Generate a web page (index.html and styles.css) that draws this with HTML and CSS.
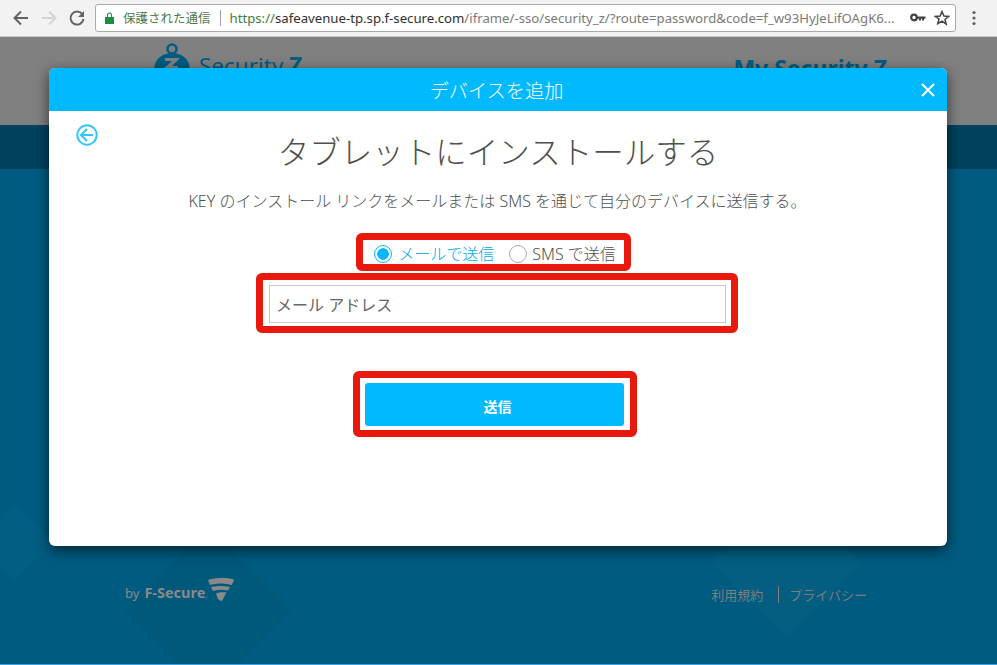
FILE: index.html
```html
<!DOCTYPE html>
<html lang="ja">
<head>
<meta charset="utf-8">
<title>デバイスを追加</title>
<link rel="stylesheet" href="styles.css">
</head>
<body>
<div class="toolbar">
  <svg class="nav" width="18" height="18" viewBox="0 0 18 18"><path d="M16 9H3M9 2.500 2.500 9 9 15.500" fill="none" stroke="#5f6368" stroke-width="2"/></svg>
  <svg class="nav" width="18" height="18" viewBox="0 0 18 18"><path d="M2 9h13M9 2.500 15.500 9 9 15.500" fill="none" stroke="#d4d4d4" stroke-width="2"/></svg>
  <svg class="nav" width="18" height="18" viewBox="0 0 18 18"><path d="M14.500 5.500A6.500 6.500 0 1 0 15.500 10" fill="none" stroke="#5f6368" stroke-width="2"/><path d="M16 2v6h-6z" fill="#5f6368"/></svg>
  <div class="omnibox">
    <svg class="lock" width="10" height="12" viewBox="0 0 10 12"><path d="M0 5h9v7H0zM2 5V3a2.500 2.500 0 0 1 5 0v2" fill="#1e8e3e"/><path d="M3 5V3a1.500 1.500 0 0 1 3 0v2z" fill="#fff"/></svg>
    <span class="secure">保護された通信</span>
    <span class="divider"></span>
    <span class="url"><span class="scheme">https://</span><span class="host">safeavenue-tp.sp.f-secure.com</span>/iframe/-sso/security_z/?route=password&amp;code=f_w93HyJeLifOAgK6...</span>
    <svg class="key" width="16" height="10" viewBox="0 0 16 10"><circle cx="4" cy="4.500" r="2.800" fill="none" stroke="#444" stroke-width="2.200"/><path d="M7 3.500h8.500v2.300H14v1.700h-2V5.800h-1v1.700H9V5.800H7z" fill="#444"/></svg>
    <svg class="star" width="16" height="16" viewBox="0 0 16 16"><path d="m8 1.500 1.900 4.500 4.800.4-3.700 3.100 1.200 4.700L8 11.200l-4.200 2.500L5 9 1.300 6.400 6.100 6z" fill="none" stroke="#444" stroke-width="1.500"/></svg>
  </div>
  <svg class="menu" width="4" height="16" viewBox="0 0 4 16"><circle cx="2" cy="2.500" r="1.600" fill="#5f6368"/><circle cx="2" cy="8" r="1.600" fill="#5f6368"/><circle cx="2" cy="13.500" r="1.600" fill="#5f6368"/></svg>
</div>

<div class="page">
  <header class="site-head">
    <div class="brand">
      <svg width="42" height="36" viewBox="0 0 42 36"><circle cx="19" cy="7" r="4.500" fill="none" stroke="#005b80" stroke-width="2.500"/><path d="M1 27C2 16 10 11 19 11s17 5 18 16z" fill="#005b80"/><path d="M12 16h15l-8 8h6v3H10l9-8h-7z" fill="#808080"/></svg>
      <span class="brand-name">Security <b>Z</b></span>
    </div>
    <div class="my-title">My Security Z</div>
  </header>
  <div class="band"></div>
  <div class="bg">
    <span class="diamond d1"></span>
    <span class="diamond d2"></span>
    <span class="diamond d3"></span>
    <footer class="site-foot">
      <div class="by">
        <span class="by-word">by</span>
        <span class="fsecure">F-Secure<small>.</small></span>
        <svg class="fs-mark" width="26" height="24" viewBox="0 0 26 24"><path d="M0 2C8 -.5 18 -.5 26 1.500L24 7C17 5 10 5 2 7zM3 9C9 7.500 15 7.500 22 9L20 12.500C15 11.500 10 11.500 5 13zM8 15.500C11 14 15 14 18.500 14.500L14 23C12 23 10.500 21.500 9.500 20z" fill="#8a8a8a"/></svg>
      </div>
      <nav class="links"><span>利用規約</span><span class="sep"></span><span>プライバシー</span></nav>
    </footer>
  </div>
</div>

<section class="modal">
  <div class="modal-head">
    <span>デバイスを追加</span>
    <svg class="close" width="14" height="14" viewBox="0 0 14 14"><path d="M1 1l12 12M13 1 1 13" stroke="#fff" stroke-width="2" fill="none"/></svg>
  </div>
  <div class="modal-body">
    <svg class="back" width="24" height="24" viewBox="0 0 24 24"><circle cx="12" cy="12" r="9.700" fill="none" stroke="#36c4ff" stroke-width="2"/><path d="M18 12H6M12 6l-6 6 6 6" fill="none" stroke="#36c4ff" stroke-width="2"/></svg>
    <h1>タブレットにインストールする</h1>
    <p class="lead">KEY のインストール リンクをメールまたは SMS を通じて自分のデバイスに送信する。</p>
    <div class="radios">
      <label class="radio on"><span class="dot"></span>メールで送信</label>
      <label class="radio"><span class="dot"></span>SMS で送信</label>
    </div>
    <div class="field">メール アドレス</div>
    <button class="send">送信</button>
  </div>
</section>

<span class="mark mark-radio"></span>
<span class="mark mark-input"></span>
<span class="mark mark-send"></span>
</body>
</html>
```
FILE: styles.css
```css
* { box-sizing: border-box; }
html, body { margin: 0; height: 100%; }
body {
  width: 997px;
  height: 665px;
  overflow: hidden;
  position: relative;
  display: flex;
  flex-direction: column;
  font-family: "Noto Sans", "Noto Sans CJK JP", sans-serif;
  background: #005b80;
  border-bottom: 1px solid #3f9fe0;
}
.toolbar {
  height: 37px;
  flex: none;
  display: flex;
  align-items: center;
  background: #f2f2f2;
  border-bottom: 1px solid #c9c9c9;
  padding: 0 0 1px 12px;
}
.nav { margin-right: 10px; flex: none; }
.toolbar .nav:nth-child(3) { margin-right: 9px; }
.omnibox {
  width: 861px;
  height: 28px;
  background: #fff;
  border: 1px solid #a9a9a9;
  border-radius: 3px;
  display: flex;
  align-items: center;
  padding: 0 5px 0 9px;
  font-size: 13.200px;
  color: #7a7a7a;
  white-space: nowrap;
}
.lock { flex: none; margin-right: 8px; }
.secure { color: #4c7a4f; font-size: 12.500px; }
.divider { width: 1px; height: 16px; background: #a0a0a0; margin: 0 9px; }
.url { flex: 1; overflow: hidden; }
.scheme { color: #3f7d42; }
.host { color: #303030; }
.key { flex: none; margin-left: 10px; }
.star { flex: none; margin-left: 8px; }
.menu { flex: none; margin-left: 16px; }

.page { flex: 1; display: flex; flex-direction: column; }
.site-head {
  height: 88px;
  flex: none;
  background: #808080;
  display: flex;
  justify-content: space-between;
  padding: 5px 110px 0 153px;
  color: #005b80;
}
.brand { display: flex; align-items: flex-start; }
.brand-name { font-size: 22.500px; margin: 8px 0 0 4px; line-height: 32px; font-weight: 400; }
.my-title { font-size: 23px; font-weight: 700; line-height: 32px; margin-top: 10px; }
.band { height: 44px; flex: none; background: #00425e; }
.bg { flex: 1; position: relative; overflow: hidden; }
.diamond { position: absolute; transform: rotate(45deg); }
.d1 { left: -15px; top: 345px; width: 57px; height: 57px; background: #035e83; }
.d2 { left: 149px; top: 382px; width: 118px; height: 118px; background: #00587b; }
.d3 { left: 734px; top: 341px; width: 106px; height: 106px; background: #045e81; }
.site-foot {
  position: absolute;
  left: 125px;
  right: 130px;
  top: 405px;
  display: flex;
  justify-content: space-between;
  align-items: flex-start;
}
.by { display: flex; align-items: flex-start; color: #8a8a8a; }
.by-word { font-size: 13px; margin-top: 10px; margin-right: 5px; line-height: 18px; }
.fsecure { font-size: 14.500px; font-weight: 700; margin-top: 9px; line-height: 18px; }
.fsecure small { font-size: 9px; font-weight: 400; }
.fs-mark { margin-top: 4px; }
.links {
  display: flex;
  align-items: center;
  font-size: 13px;
  color: #7d7d7d;
  margin-top: 11px;
}
.sep { width: 1px; height: 17px; background: #7d7d7d; margin: 0 10px 0 15px; }

.modal {
  position: absolute;
  left: 49px;
  top: 68px;
  width: 898px;
  height: 478px;
  background: #fff;
  border-radius: 6px;
  box-shadow: 0 4px 14px rgba(0, 0, 0, .6);
  overflow: hidden;
  display: flex;
  flex-direction: column;
}
.modal-head {
  height: 43px;
  flex: none;
  background: #00b9ff;
  color: #fff;
  font-size: 19.200px;
  font-weight: 300;
  display: flex;
  align-items: center;
  justify-content: center;
  position: relative;
  padding-right: 3px;
}
.close { position: absolute; right: 12px; top: 15px; }
.modal-body {
  flex: 1;
  position: relative;
  display: flex;
  flex-direction: column;
  align-items: center;
  color: #4f4f4f;
}
.back { position: absolute; left: 26px; top: 12px; }
h1 {
  margin: 17px 0 0;
  font-size: 31.500px;
  font-weight: 300;
  line-height: 48px;
}
.lead { margin: 14px 0 0 -1px; font-size: 16px; line-height: 22px; font-weight: 300; }
.radios {
  display: flex;
  gap: 15px;
  margin: 31px 6px 0 0;
  font-size: 16px;
  line-height: 22px;
  font-weight: 300;
}
.radio { display: flex; align-items: center; }
.radio .dot {
  width: 18px;
  height: 18px;
  border-radius: 50%;
  border: 1px solid #aaa;
  margin-right: 6px;
  background: #fff;
}
.radio:last-child .dot { margin-right: 5px; }
.radio.on { color: #00a9f0; }
.radio.on .dot {
  border: 1px solid #00b9ff;
  background: radial-gradient(circle, #00b9ff 0 5.500px, #fff 6px);
}
.field {
  width: 457px;
  height: 38px;
  margin: 20px 1px 0 0;
  border: 1px solid #c8c8c8;
  font-size: 16px;
  line-height: 39px;
  padding-left: 6px;
  text-align: left;
  color: #666;
}
.send {
  width: 259px;
  height: 43px;
  margin: 60px 7px 0 0;
  padding: 2px 0 0 6px;
  border: 0;
  border-radius: 3px;
  background: #00b9ff;
  color: #fff;
  font: 700 14px "Noto Sans", "Noto Sans CJK JP", sans-serif;
}

.mark {
  position: absolute;
  border: 7px solid #e8180c;
  border-radius: 6px;
}
.mark-radio { left: 356px; top: 233px; width: 275px; height: 38px; }
.mark-input { left: 256px; top: 273px; width: 482px; height: 60px; }
.mark-send { left: 353px; top: 371px; width: 284px; height: 66px; }
```
